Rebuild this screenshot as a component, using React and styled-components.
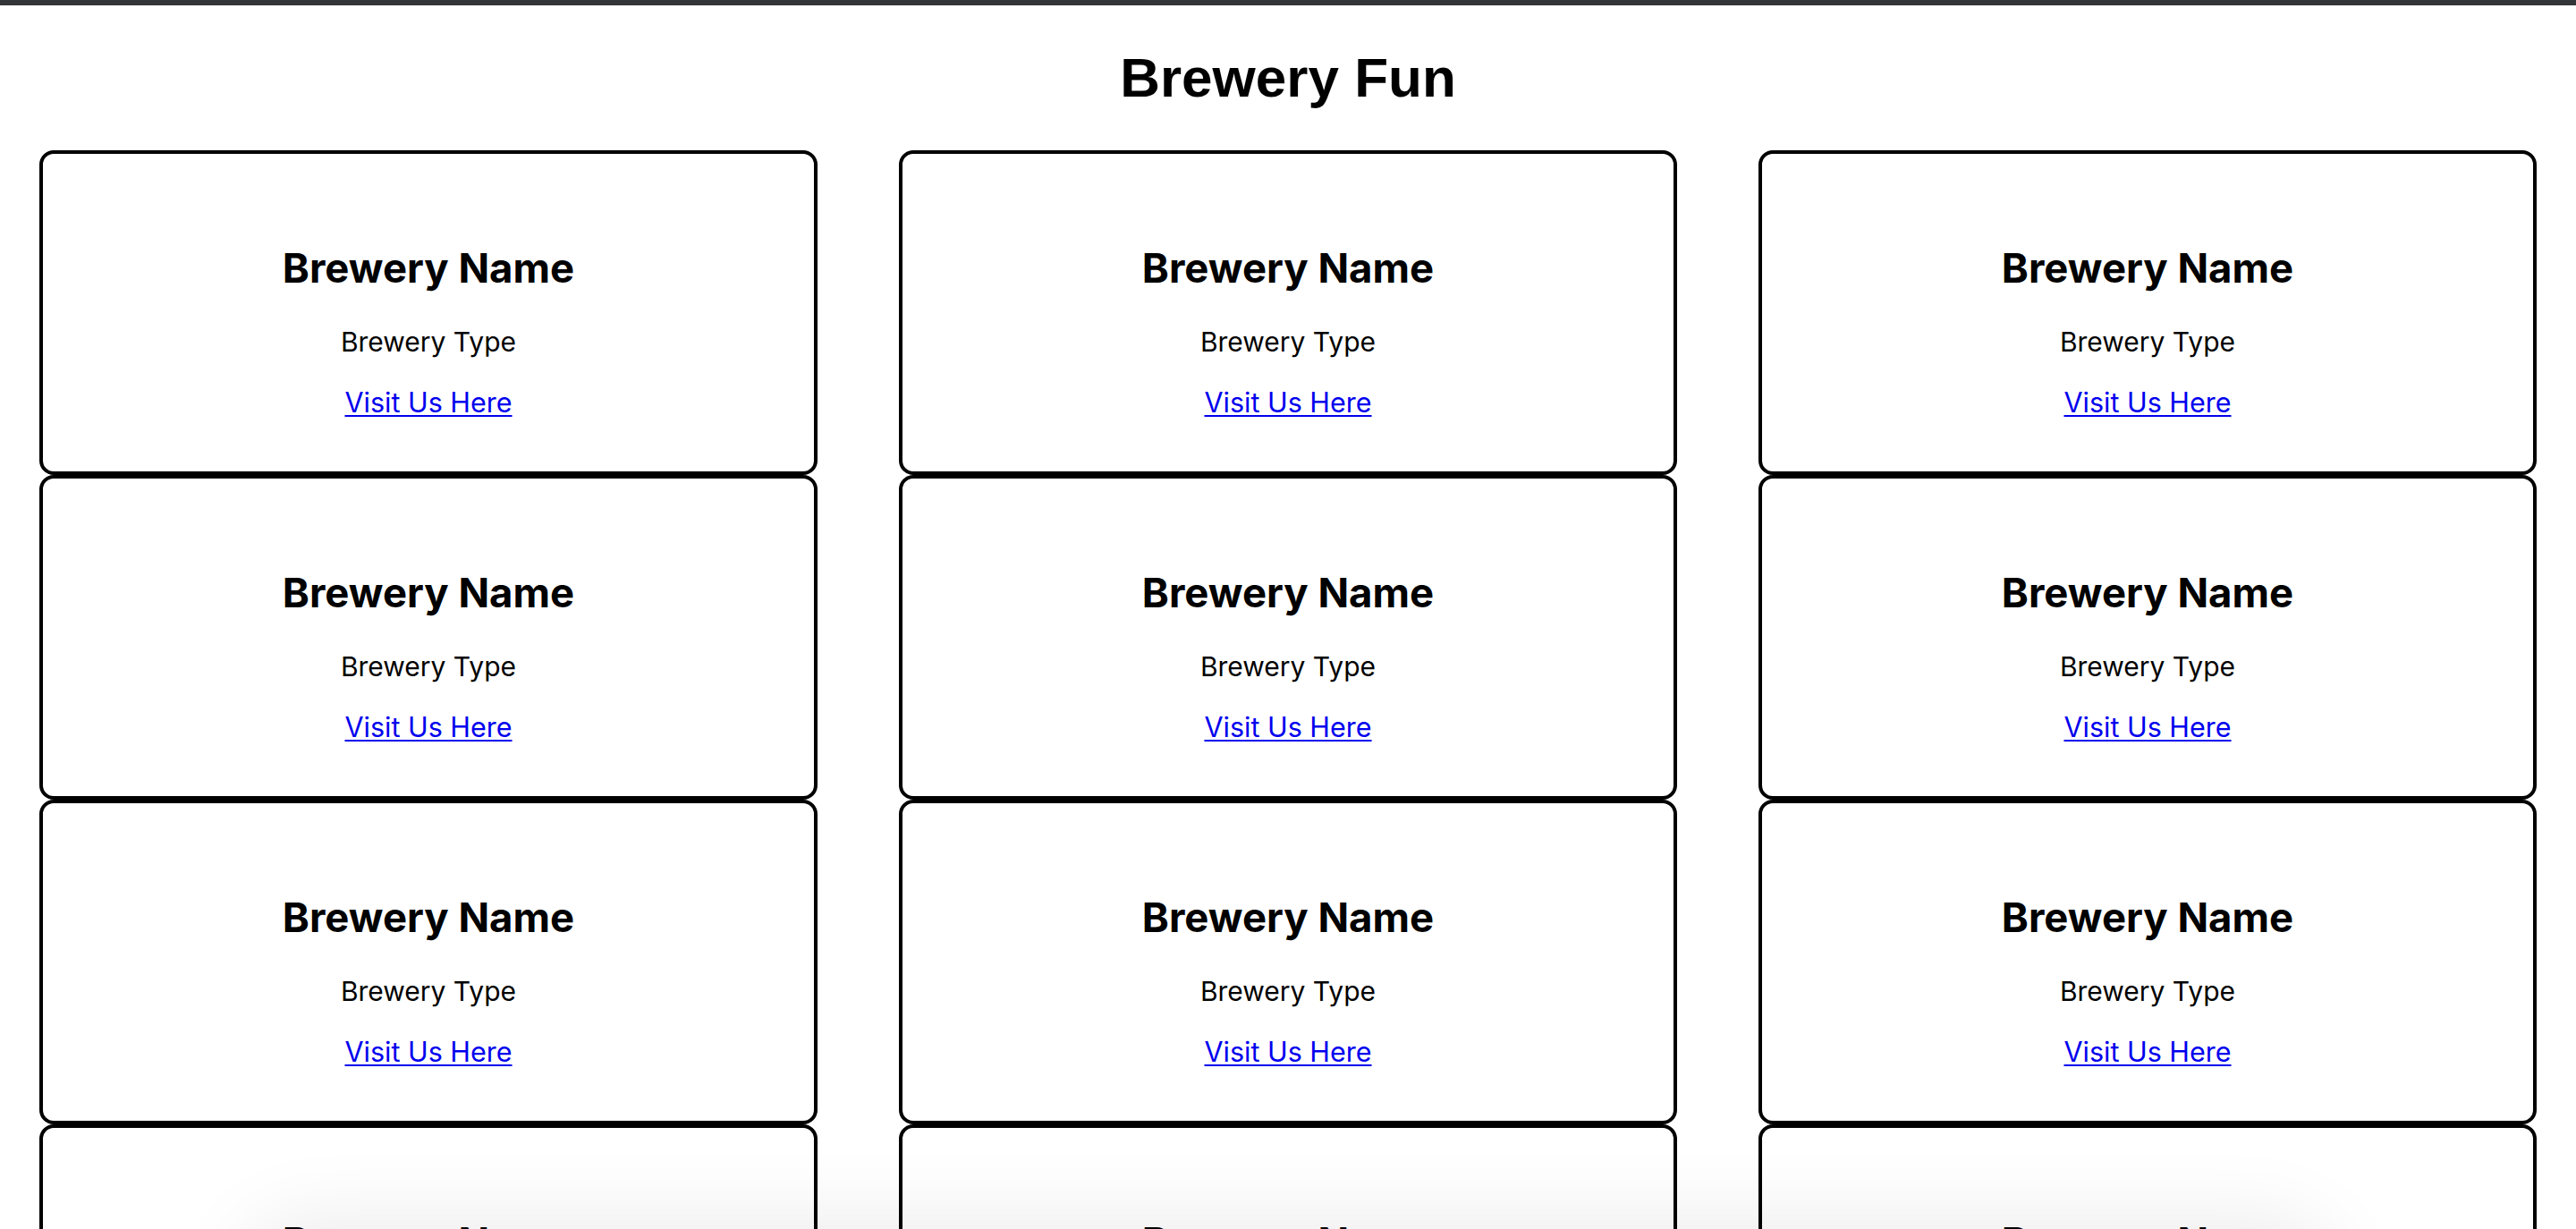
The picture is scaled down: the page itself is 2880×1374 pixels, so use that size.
import React from "react";
import styled, { createGlobalStyle } from "styled-components";

const GlobalStyle = createGlobalStyle`
  html, body {
    margin: 0;
    padding: 0;
    background: #ffffff;
  }
  html::-webkit-scrollbar, body::-webkit-scrollbar {
    display: none;
    width: 0;
  }
  html {
    scrollbar-width: none;
  }
  body {
    font-family: Inter, "Noto Sans", sans-serif;
    color: #000;
  }
`;

const Page = styled.div`
  display: flex;
  flex-direction: column;
  min-height: 100vh;
`;

const TopBar = styled.div`
  height: 6px;
  background: #333437;
  flex-shrink: 0;
`;

const Title = styled.h1`
  margin: 45px 0 0;
  font-family: "Liberation Sans", Arial, sans-serif;
  font-weight: 700;
  font-size: 62px;
  line-height: 72px;
  text-align: center;
  letter-spacing: 0;
`;

const Grid = styled.div`
  display: grid;
  grid-template-columns: repeat(3, 870px);
  justify-content: space-between;
  padding: 0 44px;
  margin-top: 45px;
`;

const Card = styled.div`
  box-sizing: border-box;
  height: 363px;
  border: 4px solid #000;
  border-radius: 16px;
  display: flex;
  flex-direction: column;
  align-items: center;
  padding-top: 101px;
  background: #fff;
`;

const Name = styled.h2`
  margin: 0;
  font-family: Inter, "Noto Sans", sans-serif;
  font-weight: 700;
  font-size: 45.5px;
  line-height: 54px;
`;

const Type = styled.p`
  margin: 37px 0 0;
  font-family: Inter, "Noto Sans", sans-serif;
  font-weight: 400;
  font-size: 30px;
  line-height: 36px;
`;

const Link = styled.a`
  margin-top: 32px;
  font-family: Inter, "Noto Sans", sans-serif;
  font-size: 30.5px;
  line-height: 36px;
  color: #0000ee;
  text-decoration: underline;
  text-underline-offset: 3px;
  text-decoration-thickness: 2px;
`;

const DockShadow = styled.div`
  position: fixed;
  left: 300px;
  right: 300px;
  bottom: -140px;
  height: 120px;
  border-radius: 40px;
  box-shadow: 0 0 90px 30px rgba(0, 0, 0, 0.08);
  pointer-events: none;
`;

const breweries = Array.from({ length: 12 }, (_, i) => ({
  id: i,
  name: "Brewery Name",
  type: "Brewery Type",
  url: "#",
}));

export default function App() {
  return (
    <>
      <GlobalStyle />
      <Page>
        <TopBar />
        <Title>Brewery Fun</Title>
        <Grid>
          {breweries.map((b) => (
            <Card key={b.id}>
              <Name>{b.name}</Name>
              <Type>{b.type}</Type>
              <Link href={b.url}>Visit Us Here</Link>
            </Card>
          ))}
        </Grid>
      </Page>
      <DockShadow />
    </>
  );
}
